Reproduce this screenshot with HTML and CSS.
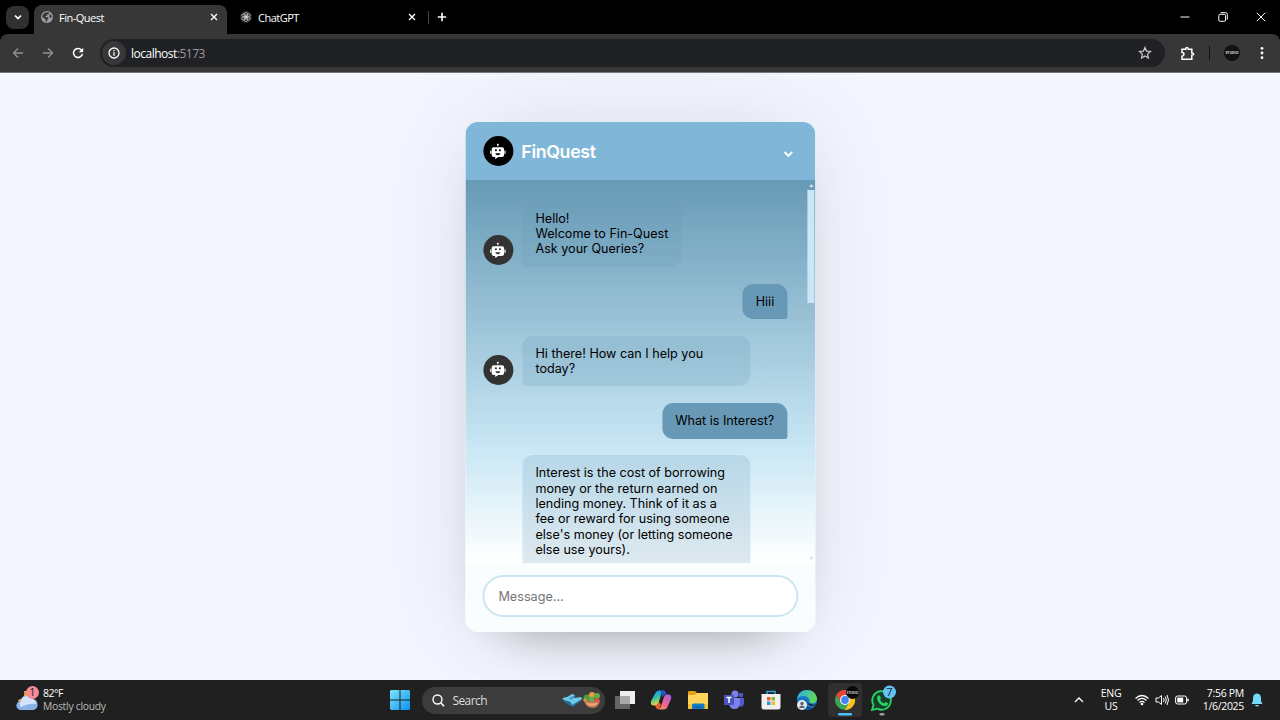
FILE: index.html
```html
<!DOCTYPE html>
<html lang="en">
<head>
<meta charset="utf-8">
<title>Fin-Quest</title>
<link rel="stylesheet" href="styles.css">
</head>
<body>
<svg class="defs" aria-hidden="true">
  <symbol id="robot" viewBox="0 0 1024 1024"><path d="M738.3 287.6H285.7c-59 0-106.8 47.8-106.8 106.8v303.1c0 59 47.8 106.8 106.8 106.8h81.5v111.1c0 .7.8 1.1 1.4.7l166.9-110.6 41.8-.8h117.4l43.6-.4c59 0 106.8-47.8 106.8-106.8V394.5c0-59-47.8-106.9-106.8-106.9zM351.7 448.2c0-29.5 23.9-53.5 53.5-53.5s53.5 23.9 53.5 53.5-23.9 53.5-53.5 53.5-53.5-23.9-53.5-53.5zm157.9 267.1c-67.8 0-123.8-47.5-132.3-109h264.6c-8.6 61.5-64.5 109-132.3 109zm110-213.7c-29.5 0-53.5-23.9-53.5-53.5s23.9-53.5 53.5-53.5 53.5 23.9 53.5 53.5-23.9 53.5-53.5 53.5zM867.2 644.5V453.1h26.5c19.4 0 35.1 15.7 35.1 35.1v121.1c0 19.4-15.7 35.1-35.1 35.1h-26.5zM95.2 609.4V488.2c0-19.4 15.7-35.1 35.1-35.1h26.5v191.3h-26.5c-19.4 0-35.1-15.7-35.1-35.1zM561.5 149.6c0 23.4-15.6 43.3-36.9 49.7v44.9h-30v-44.9c-21.4-6.5-36.9-26.3-36.9-49.7 0-28.6 23.3-51.9 51.9-51.9s51.9 23.3 51.9 51.9z"/></symbol>
</svg>

<header class="tabs">
  <button class="tab-search"><svg width="10" height="10" viewBox="0 0 10 10"><path class="line" stroke-width="1.7" d="M2 3.5 5 6.5 8 3.5"/></svg></button>
  <div class="tab tab-active">
    <svg width="12" height="12" viewBox="0 0 12 12"><circle cx="6" cy="6" r="6" fill="#9aa0a6"/><path fill="#37393b" d="M5.6 1.2 8.2 1.6 8 3 6.4 3.3 6 4.8 4.4 5 4.6 6 7 6.2 7.6 7.6 6.4 8.7 6 10.8 4.6 10.4 4.4 8.6 2.8 7 1.2 6.6C1.1 3.5 3 1.5 5.6 1.2zM9.3 3 10.7 5 10.5 7.2 9 6.5 8 5z"/></svg>
    <span class="tab-title">Fin-Quest</span>
    <svg class="tab-close" width="8" height="8" viewBox="0 0 8 8"><path class="line" stroke-width="1.4" d="M1 1 7 7M7 1 1 7"/></svg>
  </div>
  <div class="tab">
    <svg width="12" height="12" viewBox="0 0 12 12"><circle cx="6" cy="6" r="6" fill="#252525"/><g fill="none" stroke="#ddd" stroke-width=".6"><ellipse cx="6" cy="3.9" rx="1.8" ry="2.7"/><ellipse cx="6" cy="3.9" rx="1.8" ry="2.7" transform="rotate(60 6 6)"/><ellipse cx="6" cy="3.9" rx="1.8" ry="2.7" transform="rotate(120 6 6)"/><ellipse cx="6" cy="3.9" rx="1.8" ry="2.7" transform="rotate(180 6 6)"/><ellipse cx="6" cy="3.9" rx="1.8" ry="2.7" transform="rotate(240 6 6)"/><ellipse cx="6" cy="3.9" rx="1.8" ry="2.7" transform="rotate(300 6 6)"/></g></svg>
    <span class="tab-title">ChatGPT</span>
    <svg class="tab-close" width="8" height="8" viewBox="0 0 8 8"><path class="line" stroke-width="1.4" d="M1 1 7 7M7 1 1 7"/></svg>
  </div>
  <i class="tab-divider"></i>
  <svg class="new-tab" width="10" height="10" viewBox="0 0 10 10"><path class="line" stroke-width="1.6" d="M5 .8V9.2M.8 5H9.2"/></svg>
  <div class="window-controls">
    <svg width="10" height="10" viewBox="0 0 10 10"><path class="line" d="M.5 5H9.5"/></svg>
    <svg width="10" height="10" viewBox="0 0 10 10"><rect class="line" x=".8" y="2.3" width="6.8" height="7" rx="1.3"/><path class="line" d="M2.5.7H7.5Q9.3.7 9.3 2.5V7.6"/></svg>
    <svg width="10" height="10" viewBox="0 0 10 10"><path class="line" d="M.8.8 9.2 9.2M9.2.8.8 9.2"/></svg>
  </div>
</header>

<nav class="toolbar">
  <div class="nav-buttons">
    <svg class="dim" width="12" height="12" viewBox="0 0 12 12"><path class="line" stroke-width="1.3" d="M11 6H1.5M6 1.5 1.5 6 6 10.5"/></svg>
    <svg class="dim" width="12" height="12" viewBox="0 0 12 12"><path class="line" stroke-width="1.3" d="M1 6H10.5M6 1.5 10.5 6 6 10.5"/></svg>
    <svg width="12" height="12" viewBox="0 0 12 12"><path class="line" stroke-width="1.5" d="M10.4 7A4.5 4.5 0 1 1 9.4 3L10.4 4"/><path fill="#fff" d="M11.2.8V5.2H6.8z"/></svg>
  </div>
  <div class="address">
    <span class="site-info"><svg width="12" height="12" viewBox="0 0 12 12"><circle class="line" cx="6" cy="6" r="5" stroke-width="1.3"/><path class="line" stroke-width="1.3" d="M6 5.3V8.8M6 3.1V4.3"/></svg></span>
    <span class="url">localhost<span class="port">:5173</span></span>
    <svg class="star" width="14" height="14" viewBox="0 0 14 14"><path fill="none" stroke="#ccc" stroke-width="1.2" d="M7 1.5 8.6 5.1 12.5 5.5 9.6 8.1 10.4 12 7 10 3.6 12 4.4 8.1 1.5 5.5 5.4 5.1z"/></svg>
  </div>
  <svg class="extensions" width="15" height="15" viewBox="0 0 15 15"><path class="line" stroke-width="1.5" d="M2 3.2H5.8Q5.8 1.4 7 1.4T8.200 3.2H11.8V6.9Q13.6 6.900 13.6 8.1T11.8 9.3V13.3H2V10.2Q4 10 4 8.3T2 6.5z"/></svg>
  <i class="toolbar-divider"></i>
  <span class="profile">STUDIO</span>
  <svg class="kebab" width="4" height="14" viewBox="0 0 4 14"><g fill="#fff"><circle cx="2" cy="2.3" r="1.4"/><circle cx="2" cy="7" r="1.4"/><circle cx="2" cy="11.7" r="1.4"/></g></svg>
</nav>

<main class="page">
  <section class="chat">
    <header class="chat-header">
      <span class="avatar avatar-header"><svg width="19" height="19"><use href="#robot"/></svg></span>
      <h1>FinQuest</h1>
      <svg class="collapse" width="10" height="8" viewBox="0 0 10 8"><path class="line" stroke-width="1.9" d="M1.2 2 5 5.8 8.8 2"/></svg>
    </header>
    <div class="chat-body">
      <div class="messages">
        <div class="row"><span class="avatar"><svg width="19" height="19"><use href="#robot"/></svg></span><p class="bubble">Hello!<br>Welcome to Fin-Quest<br>Ask your Queries?</p></div>
        <div class="row user"><p class="bubble">Hiii</p></div>
        <div class="row"><span class="avatar"><svg width="19" height="19"><use href="#robot"/></svg></span><p class="bubble">Hi there! How can I help you<br>today?</p></div>
        <div class="row user"><p class="bubble">What is Interest?</p></div>
        <div class="row"><span class="avatar"></span><p class="bubble long">Interest is the cost of borrowing<br>money or the return earned on<br>lending money. Think of it as a<br>fee or reward for using someone<br>else's money (or letting someone<br>else use yours).<br>&nbsp;</p></div>
      </div>
      <div class="scrollbar">
        <i class="arrow up"></i><i class="thumb"></i><i class="arrow down"></i>
      </div>
    </div>
    <footer class="chat-footer"><input type="text" placeholder="Message..."></footer>
  </section>
</main>

<footer class="taskbar">
  <div class="weather">
    <svg width="26" height="28" viewBox="0 0 26 28"><path fill="#f3a73b" d="M9 5Q11 12 3 14 5 21 13 18 18 13 15 5z"/><path fill="#8bb1e9" d="M6 24a4.500 4.500 0 0 1-.3-9A6 6 0 0 1 17 13a5.600 5.600 0 0 1 1.500 11z"/><path fill="#d4e4fb" d="M6 21a4 4 0 0 1 0-6 6 6 0 0 1 11-2 5 5 0 0 1 4 5Q14 17 6 21z"/><circle cx="17.500" cy="6.500" r="6.500" fill="#f58b94"/><text x="17.500" y="10.300" text-anchor="middle" class="badge-text">1</text></svg>
    <div><div class="degrees">82°F</div><div class="sky">Mostly cloudy</div></div>
  </div>
  <div class="apps">
    <svg width="20" height="20" viewBox="0 0 20 20"><defs><linearGradient id="win" x2="1" y2="1"><stop stop-color="#7ee4fd"/><stop offset="1" stop-color="#0a93ef"/></linearGradient></defs><path fill="url(#win)" d="M0 1 1 0H9.500V9.500H0zM10.500 0H19L20 1V9.500H10.500zM0 10.500H9.500V20H1L0 19zM10.500 10.500H20V19L19 20H10.500z"/></svg>
    <div class="search">
      <svg width="13" height="13" viewBox="0 0 13 13"><circle class="line" cx="5.500" cy="5.500" r="4.500" stroke-width="1.400"/><path class="line" stroke-width="1.600" d="M9 9 12 12.300"/></svg>
      <span>Search</span>
      <svg class="search-art" width="41" height="18" viewBox="0 0 41 18"><path fill="#276c96" d="M1 9 6 13 12 16 21 9V7z"/><path fill="#73c9ea" d="M1 8Q3 6 6 6L11 3 14 4 13 7 20 6 21 8 11 14Q10 10 6 10z"/><path fill="#3c9bc5" d="M6 6Q9 7 9 9L13 7 14 4Q11 5 9 7z"/><path fill="#c47850" d="M23 9H39Q38 17 31 17 24 16 23 9z"/><path fill="#eba67c" d="M25 11Q31 14 37 11 36 15 31 15 26 15 25 11z"/><circle cx="26" cy="7" r="3.500" fill="#4a9b43"/><circle cx="31" cy="4" r="3" fill="#ed9d3c"/><circle cx="31" cy="8" r="2.500" fill="#63af49"/><circle cx="36" cy="5" r="3" fill="#61ae45"/><circle cx="36" cy="9" r="2.300" fill="#df5148"/><circle cx="24" cy="9" r="1.800" fill="#e98a3d"/></svg>
    </div>
    <svg class="app" width="22" height="20" viewBox="0 0 22 20"><path fill="#eee" d="M6 1H21V14H6z"/><path fill="#666" d="M1 6H16V19H1z"/><path fill="#a9a9a9" d="M6 6H16V14H6z"/></svg>
    <svg class="app" width="22" height="20" viewBox="0 0 22 20"><defs><linearGradient id="ca" x2=".3" y2="1"><stop stop-color="#1f8fea"/><stop offset=".5" stop-color="#27bfb0"/><stop offset="1" stop-color="#ead333"/></linearGradient><linearGradient id="cb" x1="1" x2="0" y2="1"><stop stop-color="#9a61ee"/><stop offset=".5" stop-color="#ef6098"/><stop offset="1" stop-color="#f9a43c"/></linearGradient></defs><path fill="url(#ca)" d="M6 2Q7 .5 9 .5H14Q12 1 11 5L8.500 13Q7.500 15.500 5 15.500H3Q.2 15 1 11z"/><path fill="url(#cb)" d="M17 18Q15.500 19.500 13 19.500H8Q10.500 19 11.500 15L14 7Q15 4.500 17 4.500H19Q22 5 21 9z"/><path fill="#2254c3" d="M10 .5H14Q16 1 16.500 4.500 14 4.500 12.500 7z"/><path fill="#ef5b3d" d="M5 15.500Q8 15 9 12.500L11 14Q10 19 8 19.500 6 19 5 15.500z"/></svg>
    <svg class="app" width="22" height="20" viewBox="0 0 22 20"><path fill="#e3a21a" d="M1 2Q1 1 2 1H8L10 3H20Q21 3 21 4V10H1z"/><path fill="#ffd65a" d="M1 5H8L10 3H21V19H1z"/><path fill="#f5c239" d="M1 14H21V19H1z"/><path fill="#117bc8" d="M5 15Q5 13.500 6.500 13.500H16Q17.500 13.500 17.500 15V19H5z"/><path fill="#0a569b" d="M7.500 16.500H15V17.500H7.500z"/></svg>
    <svg class="app" width="22" height="20" viewBox="0 0 22 20"><circle cx="12" cy="4" r="3.500" fill="#7b83eb"/><circle cx="18" cy="5" r="2.300" fill="#5059c9"/><path fill="#5059c9" d="M13 8H21V14Q20 17 17 17z"/><path fill="#7b83eb" d="M6 8H17V14Q16 19 11.500 19 7 19 6 14z"/><rect x="1" y="5" width="10" height="10" rx="1" fill="#4b53bc"/><path fill="none" stroke="#fff" stroke-width="1.500" d="M3.500 7.500H8.500M6 7.500V13"/></svg>
    <svg class="app" width="22" height="20" viewBox="0 0 22 20"><path fill="none" stroke="#31a4dc" stroke-width="1.500" d="M7 5V1.500H15V5"/><path fill="#f0f0f0" d="M1.500 4H20.500V17Q20.500 19.500 18 19.500H4Q1.500 19.500 1.500 17z"/><path fill="#ef5b37" d="M7 7H10.500V10.500H7z"/><path fill="#84b93c" d="M11.500 7H15V10.500H11.500z"/><path fill="#249bdc" d="M7 11.500H10.500V15H7z"/><path fill="#f3b727" d="M11.500 11.500H15V15H11.500z"/></svg>
    <svg class="app" width="22" height="22" viewBox="0 0 22 22"><defs><linearGradient id="edge" x2="1" y2=".4"><stop stop-color="#2aaef0"/><stop offset="1" stop-color="#62d65b"/></linearGradient></defs><circle cx="11" cy="11" r="10" fill="#1679ca"/><path fill="url(#edge)" d="M1 10C2 3 7 1 11 1 18 1 21 6 21 10 21 13 18 15 15 14 12 13 14 12 13 10 11 6 4 6 1 10z"/><path fill="#0b4c91" d="M10 10Q8 16 13 18T20 16Q16 22 9 20 4 15 10 10z"/><path fill="#222" d="M11 12Q12 15 16 15.500H20Q16 18 13 16 11 14 11 12z"/><circle cx="6" cy="16" r="5" fill="#e3e7ea"/><circle cx="6" cy="14.500" r="1.700" fill="#59636c"/><path fill="#59636c" d="M3 19Q3.500 16.500 6 16.500T9 19z"/></svg>
    <div class="active-app"><svg width="34" height="34" viewBox="0 0 34 34"><circle cx="17" cy="17" r="10" fill="#3aa757"/><path fill="#e94235" d="M17 7A10 10 0 0 1 25.700 12H17L12.700 19.500 8.300 12A10 10 0 0 1 17 7z"/><path fill="#fbc116" d="M25.700 12A10 10 0 0 1 17 27L21.300 19.500 17 12z"/><circle cx="17" cy="17" r="5" fill="#fff"/><circle cx="17" cy="17" r="3.900" fill="#4285f4"/><circle cx="24.500" cy="9.500" r="6.500" fill="#080808"/><text x="24.500" y="11" text-anchor="middle" class="studio-text">STUDIO</text><rect x="10" y="30" width="14" height="2.500" rx="1.200" fill="#4cc2ff"/></svg></div>
    <svg class="whatsapp" width="28" height="34" viewBox="0 0 28 34"><path fill="#173e29" stroke="#28d366" stroke-width="1.800" d="M3 27 4.500 22A9.300 9.300 0 1 1 8.200 25.600z"/><path fill="#28d366" d="M8.500 13Q10 11.500 11 13L12 15.500 11 17Q12.500 19.500 15 20.500L16.500 19 19 20.200Q19 23 16 23 12 23 9 18.500 7.500 15.500 8.500 13z"/><circle cx="20.500" cy="9" r="6.500" fill="#62c4f5"/><text x="20.500" y="12.800" text-anchor="middle" class="badge-text">7</text><rect x="10.500" y="30" width="5" height="2.500" rx="1.200" fill="#999"/></svg>
  </div>
  <div class="tray">
    <svg width="10" height="8" viewBox="0 0 10 8"><path class="line" stroke-width="1.300" d="M1 6 5 2 9 6"/></svg>
    <div class="language">ENG<br>US</div>
    <div class="status">
      <svg width="14" height="12" viewBox="0 0 14 12"><path class="line" stroke-width="1.200" d="M.5 4.500Q7-1.500 13.500 4.500M2.500 6.500Q7 2.200 11.500 6.500M4.500 8.700Q7 6.200 9.500 8.700"/><circle cx="7" cy="10" r="1.300" fill="#fff"/></svg>
      <svg width="14" height="12" viewBox="0 0 14 12"><path class="line" d="M1 4H3.500L6.500 1.500V10.500L3.500 8H1zM8.500 4Q9.700 6 8.500 8M10.300 2.500Q12.300 6 10.300 9.500M12 1Q15 6 12 11"/></svg>
      <svg width="14" height="12" viewBox="0 0 14 12"><rect class="line" x=".6" y="2" width="11" height="8" rx="2"/><rect x="2.200" y="3.600" width="6" height="4.800" fill="#fff"/><path class="line" stroke-width="1.500" d="M13 4.800V7.200"/></svg>
    </div>
    <div class="clock">7:56 PM<br>1/6/2025</div>
    <svg width="12" height="14" viewBox="0 0 12 14"><path fill="#76dafa" d="M6 .5Q10 .8 10 5V8L11.500 11H.5L2 8V5Q2 .8 6 .5zM4 12H8Q7.500 13.500 6 13.500T4 12z"/></svg>
  </div>
</footer>
</body>
</html>
```

FILE: styles.css
```css
* { box-sizing: border-box; }
body { margin: 0; width: 1280px; height: 720px; overflow: hidden; display: flex; flex-direction: column; background: #000; color: #fff; font-family: "Segoe UI", "Open Sans", sans-serif; }
svg { display: block; flex: none; }
.defs { display: none; }
.line { fill: none; stroke: #fff; }
.dim { opacity: .45; }

/* tab strip */
.tabs { height: 34px; flex: none; display: flex; align-items: center; padding: 0 14px 0 6px; background: #000; }
.tab-search { width: 23px; height: 23px; padding: 0; border: 0; border-radius: 8px; background: #303030; display: grid; place-items: center; }
.tab { width: 198px; height: 29px; display: flex; align-items: center; margin-top: 5px; padding: 0 9px 5px 13px; gap: 6px; font-size: 11px; }
.tab-active { margin-left: 5px; width: 193px; padding-left: 7px; background: #373737; border-radius: 8px 8px 0 0; }
.tab-title { letter-spacing: -.5px; }
.tab-close { margin-left: auto; }
.tab-divider { width: 1px; height: 13px; margin-left: 3px; background: #444; }
.new-tab { margin-left: 8px; }
.window-controls { display: flex; gap: 28px; margin-left: auto; }

/* toolbar */
.toolbar { height: 39px; flex: none; display: flex; align-items: center; padding: 0 16px 0 12px; background: #373737; border-radius: 8px 8px 0 0; border-bottom: 1px solid #777; }
.nav-buttons { display: flex; gap: 18px; }
.address { flex: none; width: 1065px; height: 28px; margin-left: 16px; display: flex; align-items: center; padding: 0 13px 0 2px; border-radius: 14px; background: #202124; }
.site-info { width: 24px; height: 24px; border-radius: 50%; display: grid; place-items: center; background: #37383a; }
.url { margin-left: 5px; font-size: 12px; letter-spacing: -.5px; }
.port { color: #999; }
.star { margin-left: auto; }
.extensions { margin-left: 15px; }
.toolbar-divider { width: 1px; height: 14px; margin-left: 14px; background: #111; }
.profile { width: 16px; height: 16px; margin-left: 14px; border-radius: 50%; background: #111; color: #ddd; font-size: 3.5px; font-weight: 700; line-height: 16px; text-align: center; }
.kebab { margin-left: auto; }

/* page */
.page { height: 607px; flex: none; overflow: hidden; padding-top: 49px; background: #f4f7ff; }
.chat { width: 350px; height: 510px; margin: 0 auto; transform: translateX(.4px); display: flex; flex-direction: column; border-radius: 12.5px; overflow: hidden; background: #fff; color: #000; font-family: Inter, sans-serif; box-shadow: 0 0 107px rgba(0,0,0,.1), 0 27px 53px -40px rgba(0,0,0,.5); }
.chat-header { height: 58px; flex: none; display: flex; align-items: center; gap: 8px; padding: 0 22px 0 17.9px; background: #80b7d9; color: #fff; }
.chat-header h1 { margin: 0; font-size: 17.8px; font-weight: 600; letter-spacing: -.35px; }
.collapse { margin-left: auto; margin-top: 6px; }
.avatar { width: 30px; height: 30px; flex: none; border-radius: 50%; display: grid; place-items: center; }
.avatar svg { fill: #fff; }
.row .avatar { margin-bottom: 1.5px; background: #333; }
.chat-header .avatar { background: #000; }
.chat-body { height: 383px; flex: none; display: flex; overflow: hidden; background: linear-gradient(#679ab6, #c9e7f5 70%, #fff); }
.messages { flex: 1; display: flex; flex-direction: column; gap: 16.7px; padding: 20.6px 19px 0 17.9px; }
.row { flex: none; display: flex; align-items: flex-end; gap: 9px; }
.bubble { margin: 0; padding: 10px 13.2px; border-radius: 10.8px 10.8px 10.8px 2.5px; background: rgba(103,154,182,.22); font-size: 12.6px; line-height: 15.4px; white-space: nowrap; }
.row:nth-child(3) .bubble, .bubble.long { width: 228px; }
.row:last-child .avatar { visibility: hidden; }
.user { justify-content: flex-end; }
.user .bubble { border-radius: 10.8px 10.8px 2.5px 10.8px; background: #6799b6; }
.scrollbar { width: 9px; display: flex; flex-direction: column; align-items: center; padding: 4px 0 3px; }
.thumb { width: 7px; height: 113px; margin-top: 3px; background: #c9e7f5; }
.arrow { border: 2px solid transparent; }
.up { border-top: 0; border-bottom: 3px solid #d5effa; }
.down { margin-top: auto; border-bottom: 0; border-top: 3px solid #c9e7f5; }
.chat-footer { flex: 1; padding: 12px 17px 15px; background: #f9fdfd; }
.chat-footer input { display: block; width: 100%; height: 42px; padding: 0 14px; border: 2px solid #cce5ef; border-radius: 27px; outline: 0; background: #fff; font: 12.67px Inter, sans-serif; }

/* taskbar */
.taskbar { flex: 1; min-height: 0; display: grid; grid-template-columns: 389.5px 1fr auto; align-items: center; padding-right: 17px; background: #202020; font-size: 11px; line-height: 13px; }
.weather { display: flex; align-items: center; gap: 2px; padding-left: 15px; }
.degrees { letter-spacing: -.5px; font-size: 10.5px; }
.sky { color: #bbb; letter-spacing: -.25px; font-size: 10.3px; }
.badge-text { font: 11px "Open Sans", sans-serif; fill: #222; }
.apps { display: flex; align-items: center; }
.search { width: 183px; height: 27px; margin: 0 9px 0 12px; display: flex; align-items: center; gap: 8px; padding: 0 3px 0 10px; border-radius: 14px; background: #3c3c3c; color: #ddd; font-size: 12px; letter-spacing: -.6px; }
.search-art { margin-left: auto; }
.app { margin-right: 14.5px; }
.active-app { width: 34px; height: 34px; margin-left: -5px; border-radius: 4px; background: #303030; }
.studio-text { font: bold 3px "Open Sans", sans-serif; fill: #ddd; }
.whatsapp { margin-left: 7px; }
.tray { display: flex; align-items: center; font-size: 10.5px; letter-spacing: -.3px; }
.language { width: 24px; margin-left: 15px; text-align: center; }
.status { display: flex; gap: 6px; margin-left: 12px; }
.clock { width: 55px; margin: 0 7px 0 0; text-align: right; }
```
